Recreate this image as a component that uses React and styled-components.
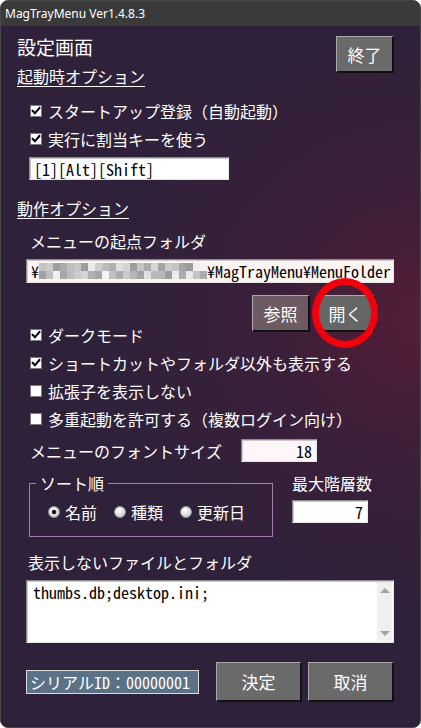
import React from 'react';
import styled, { createGlobalStyle } from 'styled-components';

const JP = `"Noto Sans Mono CJK JP", "Noto Sans CJK JP", "Liberation Mono", monospace`;

const GlobalStyle = createGlobalStyle`
  html, body { margin: 0; padding: 0; background: #ffffff; }
  body { font-family: ${JP}; }
  * { box-sizing: border-box; }
`;

const Window = styled.div`
  width: 421px;
  height: 728px;
  border: 1px solid #474747;
  border-radius: 8px;
  overflow: hidden;
  display: flex;
  flex-direction: column;
  background: #2f213a;
`;

const TitleBar = styled.div`
  flex: none;
  height: 25px;
  background: #3a3a3a;
  color: #ffffff;
  font-family: "Noto Sans", "Open Sans", sans-serif;
  font-size: 12px;
  padding-left: 4px;
  display: flex;
  align-items: center;
`;

const Body = styled.div`
  flex: 1;
  display: flex;
  flex-direction: column;
  padding: 0 26px 0 16px;
  color: #ffffff;
  font-family: ${JP};
  font-size: 16px;
  background:
    radial-gradient(ellipse 75% 42% at 100% 42%, rgba(92, 28, 56, 0.85) 0%, rgba(70, 30, 56, 0.55) 45%, rgba(47, 33, 58, 0) 100%),
    #2f213a;
`;

const Header = styled.div`
  display: flex;
  justify-content: space-between;
  align-items: flex-start;
`;

const HeaderText = styled.div`
  display: flex;
  flex-direction: column;
`;

const PageTitle = styled.h1`
  margin: 9px 0 0;
  font-size: 19px;
  line-height: 24px;
  font-weight: 500;
`;

const SectionHeading = styled.div`
  margin-top: ${(p) => p.$mt}px;
  font-size: 16px;
  line-height: 20px;
  text-decoration: underline;
  text-underline-offset: 3px;
  text-decoration-thickness: 1px;
  align-self: flex-start;
`;

const Label = styled.div`
  margin-top: ${(p) => p.$mt || 0}px;
  padding-left: ${(p) => p.$indent || 0}px;
  font-size: 16px;
  line-height: ${(p) => p.$lh || 20}px;
  white-space: nowrap;
`;

const Button = styled.button`
  width: ${(p) => p.$w}px;
  height: ${(p) => p.$h}px;
  margin-top: ${(p) => p.$mt || 0}px;
  padding: 0;
  background: ${(p) => p.$bg || '#6a6a6a'};
  color: #ffffff;
  font-family: ${JP};
  font-size: 17px;
  border-style: solid;
  border-width: 1px 2px 2px 1px;
  border-color: #a9a9a9 #101010 #101010 #a9a9a9;
  cursor: pointer;
`;

const CheckGroup = styled.div`
  display: flex;
  flex-direction: column;
  margin-top: ${(p) => p.$mt}px;
`;

const CheckRow = styled.label`
  display: flex;
  align-items: center;
  gap: 6px;
  height: 28px;
  padding-left: 13px;
  white-space: nowrap;
`;

const Field = styled.div`
  width: ${(p) => p.$w}px;
  height: ${(p) => p.$h}px;
  margin-top: ${(p) => p.$mt || 0}px;
  margin-left: ${(p) => p.$ml || 0}px;
  background: ${(p) => p.$bg || '#ffffff'};
  color: #000000;
  border-style: solid;
  border-width: 1px;
  border-color: #8c8c8c #e6e6e6 #e6e6e6 #8c8c8c;
  box-shadow: inset 1px 1px 0 #c8c8c8;
  display: flex;
  align-items: center;
  justify-content: ${(p) => (p.$right ? 'flex-end' : 'flex-start')};
  padding: 0 4px;
  font-family: ${JP};
  font-size: 16px;
  line-height: 20px;
  white-space: nowrap;
  overflow: hidden;
  flex: none;
`;

const ButtonRow = styled.div`
  display: flex;
  justify-content: flex-end;
  gap: 7px;
  margin-top: 12px;
  padding-right: 19px;
`;

const Highlight = styled.div`
  position: relative;
  display: flex;
`;

const RedRing = styled.div`
  position: absolute;
  left: -5px;
  top: -17px;
  width: 66px;
  height: 70px;
  border: 7px solid #f2000c;
  border-radius: 50%;
  pointer-events: none;
`;

const InlineRow = styled.div`
  display: flex;
  align-items: center;
  margin-top: ${(p) => p.$mt}px;
  padding-left: ${(p) => p.$indent}px;
`;

const SortRow = styled.div`
  display: flex;
  align-items: flex-start;
  margin-top: 12px;
  padding-left: 12px;
`;

const GroupBox = styled.fieldset`
  width: 244px;
  margin: 0;
  padding: 0 0 14px 0;
  border: 1px solid #a27cac;
  min-width: 0;
`;

const GroupLegend = styled.legend`
  margin-left: 6px;
  padding: 0 4px;
  font-size: 16px;
  line-height: 18px;
`;

const RadioRow = styled.div`
  display: flex;
  align-items: center;
  gap: 17px;
  margin-top: 10px;
  padding-left: 18px;
  height: 20px;
`;

const RadioItem = styled.label`
  display: flex;
  align-items: center;
  gap: 5px;
  white-space: nowrap;
`;

const SideColumn = styled.div`
  display: flex;
  flex-direction: column;
  margin-left: 19px;
`;

const TextAreaBox = styled.div`
  width: 368px;
  height: 63px;
  margin-top: 8px;
  margin-left: 9px;
  display: flex;
  background: #ffffff;
  border-style: solid;
  border-width: 1px;
  border-color: #8c8c8c #e6e6e6 #e6e6e6 #8c8c8c;
  box-shadow: inset 1px 1px 0 #c8c8c8;
`;

const TextContent = styled.div`
  flex: 1;
  padding: 2px 0 0 6px;
  color: #000000;
  font-family: ${JP};
  font-size: 16px;
  line-height: 18px;
`;

const ScrollTrack = styled.div`
  width: 15px;
  margin: 1px 1px 1px 0;
  background: #f0f0f0;
  display: flex;
  flex-direction: column;
  justify-content: space-between;
  align-items: center;
  padding: 6px 0 5px;
`;

const Arrow = styled.div`
  width: 0;
  height: 0;
  border-left: 5px solid transparent;
  border-right: 5px solid transparent;
  ${(p) => (p.$down ? 'border-top: 5px solid #a3a3a3;' : 'border-bottom: 5px solid #a3a3a3;')}
`;

const BottomRow = styled.div`
  display: flex;
  align-items: center;
  margin-top: 19px;
`;

const SerialField = styled.div`
  width: 173px;
  height: 24px;
  margin-left: 9px;
  background: #5b7186;
  border: 1px solid #dcdcdc;
  color: #ffffff;
  display: flex;
  align-items: center;
  padding-left: 3px;
  font-size: 16px;
  white-space: nowrap;
  overflow: hidden;
`;

const ButtonGroup = styled.div`
  display: flex;
  gap: 6px;
  margin-left: auto;
`;

function CheckBox({ checked }) {
  return (
    <svg width="12" height="12" viewBox="0 0 12 12" style={{ flex: 'none' }}>
      <rect x="0.5" y="0.5" width="11" height="11" fill="#ffffff" stroke="#7a7a7a" />
      {checked && (
        <path d="M2.6 5.8 L4.9 8.3 L9.4 3" fill="none" stroke="#000000" strokeWidth="2" strokeLinecap="square" />
      )}
    </svg>
  );
}

function Radio({ checked }) {
  return (
    <svg width="12" height="12" viewBox="0 0 12 12" style={{ flex: 'none' }}>
      <defs>
        <radialGradient id="rg" cx="40%" cy="35%" r="70%">
          <stop offset="0%" stopColor="#ffffff" />
          <stop offset="100%" stopColor="#c9c9c9" />
        </radialGradient>
      </defs>
      <circle cx="6" cy="6" r="5.5" fill="url(#rg)" stroke="#8d8d8d" />
      {checked && <circle cx="6" cy="6" r="2.2" fill="#111111" />}
    </svg>
  );
}

const mosaic = (() => {
  let s = 7;
  const cells = [];
  for (let r = 0; r < 2; r++) {
    for (let c = 0; c < 24; c++) {
      s = (s * 9301 + 49297) % 233280;
      const v = 150 + Math.floor((s / 233280) * 95);
      cells.push({ r, c, v });
    }
  }
  return cells;
})();

function Mosaic() {
  return (
    <svg width="168" height="16" viewBox="0 0 168 16" style={{ flex: 'none' }}>
      {mosaic.map(({ r, c, v }) => (
        <rect key={`${r}-${c}`} x={c * 7} y={r * 8} width="7" height="8" fill={`rgb(${v},${v},${v})`} />
      ))}
    </svg>
  );
}

export default function App() {
  return (
    <>
      <GlobalStyle />
      <Window>
        <TitleBar>MagTrayMenu Ver1.4.8.3</TitleBar>
        <Body>
          <Header>
            <HeaderText>
              <PageTitle>設定画面</PageTitle>
              <SectionHeading $mt={7}>起動時オプション</SectionHeading>
            </HeaderText>
            <Button $w={58} $h={37} $mt={10}>終了</Button>
          </Header>

          <CheckGroup $mt={11}>
            <CheckRow><CheckBox checked />スタートアップ登録（自動起動）</CheckRow>
            <CheckRow><CheckBox checked />実行に割当キーを使う</CheckRow>
          </CheckGroup>
          <Field $w={200} $h={23} $mt={4} $ml={12}>[1][Alt][Shift]</Field>

          <SectionHeading $mt={18}>動作オプション</SectionHeading>
          <Label $mt={13} $indent={13}>メニューの起点フォルダ</Label>
          <Field $w={368} $h={24} $mt={8} $ml={9} $bg="#fff4f4">
            ¥<Mosaic />¥MagTrayMenu¥MenuFolder
          </Field>

          <ButtonRow>
            <Button $w={58} $h={37} $bg="#6e5a62">参照</Button>
            <Highlight>
              <Button $w={58} $h={37} $bg="#666666">開く</Button>
              <RedRing />
            </Highlight>
          </ButtonRow>

          <CheckGroup $mt={-11}>
            <CheckRow><CheckBox checked />ダークモード</CheckRow>
            <CheckRow><CheckBox checked />ショートカットやフォルダ以外も表示する</CheckRow>
            <CheckRow><CheckBox />拡張子を表示しない</CheckRow>
            <CheckRow><CheckBox />多重起動を許可する（複数ログイン向け）</CheckRow>
          </CheckGroup>

          <InlineRow $mt={6} $indent={13}>
            <Label>メニューのフォントサイズ</Label>
            <Field $w={76} $h={23} $ml={19} $bg="#fff6f9" $right>18</Field>
          </InlineRow>

          <SortRow>
            <GroupBox>
              <GroupLegend>ソート順</GroupLegend>
              <RadioRow>
                <RadioItem><Radio checked />名前</RadioItem>
                <RadioItem><Radio />種類</RadioItem>
                <RadioItem><Radio />更新日</RadioItem>
              </RadioRow>
            </GroupBox>
            <SideColumn>
              <Label $lh={18}>最大階層数</Label>
              <Field $w={76} $h={23} $mt={8} $right>7</Field>
            </SideColumn>
          </SortRow>

          <Label $mt={15} $indent={11}>表示しないファイルとフォルダ</Label>
          <TextAreaBox>
            <TextContent>thumbs.db;desktop.ini;</TextContent>
            <ScrollTrack>
              <Arrow />
              <Arrow $down />
            </ScrollTrack>
          </TextAreaBox>

          <BottomRow>
            <SerialField>シリアルID：00000001</SerialField>
            <ButtonGroup>
              <Button $w={86} $h={40}>決定</Button>
              <Button $w={86} $h={40}>取消</Button>
            </ButtonGroup>
          </BottomRow>
        </Body>
      </Window>
    </>
  );
}
